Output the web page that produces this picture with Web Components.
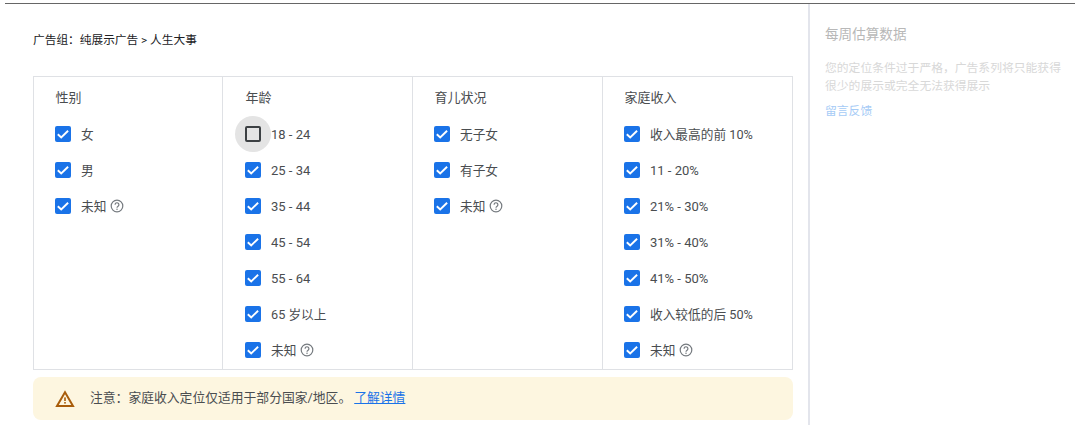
<!DOCTYPE html>
<html>
<head>
<meta charset="utf-8">
<style>
  html, body { margin: 0; background: #fff; overflow: hidden; }
  body { font-family: Roboto, "Noto Sans CJK SC", sans-serif; }
</style>
</head>
<body>

<ad-page>
  <span slot="crumb">广告组：纯展示广告 &gt; 人生大事</span>
  <target-table>
    <target-column>
      <span slot="title">性别</span>
      <target-option>女</target-option>
      <target-option>男</target-option>
      <target-option help>未知</target-option>
    </target-column>
    <target-column>
      <span slot="title">年龄</span>
      <target-option unchecked latin>18 - 24</target-option>
      <target-option latin>25 - 34</target-option>
      <target-option latin>35 - 44</target-option>
      <target-option latin>45 - 54</target-option>
      <target-option latin>55 - 64</target-option>
      <target-option>65 岁以上</target-option>
      <target-option help>未知</target-option>
    </target-column>
    <target-column>
      <span slot="title">育儿状况</span>
      <target-option>无子女</target-option>
      <target-option>有子女</target-option>
      <target-option help>未知</target-option>
    </target-column>
    <target-column>
      <span slot="title">家庭收入</span>
      <target-option>收入最高的前 10%</target-option>
      <target-option latin>11 - 20%</target-option>
      <target-option latin>21% - 30%</target-option>
      <target-option latin>31% - 40%</target-option>
      <target-option latin>41% - 50%</target-option>
      <target-option>收入较低的后 50%</target-option>
      <target-option help>未知</target-option>
    </target-column>
  </target-table>
  <ad-notice>注意：家庭收入定位仅适用于部分国家/地区。<a slot="link" href="#">了解详情</a></ad-notice>
  <estimate-side slot="side">
    <span slot="title">每周估算数据</span>
    您的定位条件过于严格，广告系列将只能获得很少的展示或完全无法获得展示
    <span slot="link">留言反馈</span>
  </estimate-side>
</ad-page>

<script>
// page frame: the dark rule on top, main area on the left, estimate panel on the right
class AdPage extends HTMLElement {
  constructor() {
    super();
    const shadow = this.attachShadow({ mode: "open" });
    shadow.innerHTML = `
    <style>
      :host {
        display: block;
        height: 425px;
        padding-top: 3px;
        box-sizing: border-box;
      }
      .frame {
        margin-left: 5px;
        border-top: 1px solid #666;
        display: flex;
        height: 421px;
      }
      .main {
        width: 803px;
        box-sizing: border-box;
        padding: 0 15px 0 28px;
        flex: none;
      }
      .crumb {
        font-size: 11.7px;
        line-height: 18px;
        color: #202124;
        margin-top: 27px;
        margin-bottom: 27px;
      }
      .side {
        flex: 1;
        border-left: 2px solid #e3e5ec;
      }
    </style>
    <div class="frame">
      <div class="main">
        <div class="crumb"><slot name="crumb"></slot></div>
        <slot></slot>
      </div>
      <div class="side"><slot name="side"></slot></div>
    </div>
    `;
  }
}

class TargetTable extends HTMLElement {
  constructor() {
    super();
    const shadow = this.attachShadow({ mode: "open" });
    shadow.innerHTML = `
    <style>
      :host {
        display: grid;
        grid-template-columns: 189px 190px 190px 1fr;
        width: 760px;
        height: 294px;
        box-sizing: border-box;
        border: 1px solid #dfe1e5;
      }
    </style>
    <slot></slot>
    `;
  }
}

class TargetColumn extends HTMLElement {
  constructor() {
    super();
    const shadow = this.attachShadow({ mode: "open" });
    shadow.innerHTML = `
    <style>
      :host {
        display: block;
        box-sizing: border-box;
        padding: 12px 0 0 21px;
        border-right: 1px solid #dfe1e5;
      }
      :host(:nth-child(2)) { padding-left: 22px; }
      :host(:last-child) { border-right: none; }
      .title {
        font-size: 13px;
        line-height: 18px;
        color: #4a4d50;
        margin-bottom: 9px;
        padding-left: 0.5px;
      }
    </style>
    <div class="title"><slot name="title"></slot></div>
    <slot></slot>
    `;
  }
}

class TargetOption extends HTMLElement {
  constructor() {
    super();
    const shadow = this.attachShadow({ mode: "open" });
    const checked = !this.hasAttribute("unchecked");
    const box = checked
      ? `<svg width="16" height="16" viewBox="0 0 16 16"><rect width="16" height="16" rx="2" fill="#1a73e8"/><path d="M2.8 8.2l3.4 3.3 6.9-6.8" fill="none" stroke="#fff" stroke-width="1.9"/></svg>`
      : `<span class="ripple"></span><svg width="16" height="16" viewBox="0 0 16 16"><rect x="1" y="1" width="14" height="14" rx="1" fill="none" stroke="#3c4043" stroke-width="2"/></svg>`;
    const help = this.hasAttribute("help")
      ? `<svg class="help" width="14" height="14" viewBox="0 0 14 14"><circle cx="7" cy="7" r="5.8" fill="none" stroke="#757a7f" stroke-width="1.2"/><path d="M5.1 5.7a1.9 1.9 0 1 1 3 1.5c-.7.5-1.1.8-1.1 1.6" fill="none" stroke="#757a7f" stroke-width="1.2"/><circle cx="7" cy="10.3" r=".75" fill="#757a7f"/></svg>`
      : "";
    shadow.innerHTML = `
    <style>
      :host {
        display: flex;
        align-items: center;
        height: 36px;
        font-size: 12.7px;
        color: #4a4d50;
      }
      :host([latin]) { font-size: 13px; }
      .box {
        position: relative;
        width: 16px;
        height: 16px;
        margin-right: 10px;
        flex: none;
      }
      svg { display: block; position: relative; }
      .label { padding-bottom: 1px; }
      :host([latin]) .label { padding-bottom: 0; }
      .ripple {
        position: absolute;
        left: -10px;
        top: -10px;
        width: 36px;
        height: 36px;
        border-radius: 50%;
        background: #e4e4e4;
      }
      .help { margin-left: 4px; }
    </style>
    <span class="box">${box}</span>
    <span class="label"><slot></slot></span>
    ${help}
    `;
  }
}

class AdNotice extends HTMLElement {
  constructor() {
    super();
    const shadow = this.attachShadow({ mode: "open" });
    shadow.innerHTML = `
    <style>
      :host {
        display: flex;
        align-items: center;
        width: 760px;
        height: 43px;
        margin-top: 7px;
        padding-left: 22px;
        box-sizing: border-box;
        background: #fdf6e0;
        border-radius: 8px;
        font-size: 12.8px;
        color: #4a4d50;
      }
      svg { margin-right: 15px; flex: none; }
      .text { padding-bottom: 4px; }
      ::slotted(a) {
        margin-left: 3px;
        padding-bottom: 4px;
        color: #1a73e8;
      }
    </style>
    <svg width="20" height="18" viewBox="0 0 20 18">
      <path d="M10 2.2L18 16H2z" fill="none" stroke="#a85c0a" stroke-width="2"/>
      <rect x="9.2" y="7.4" width="1.6" height="3.6" fill="#a85c0a"/>
      <rect x="9.2" y="12" width="1.6" height="1.6" fill="#a85c0a"/>
    </svg>
    <span class="text"><slot></slot></span>
    <slot name="link"></slot>
    `;
  }
}

class EstimateSide extends HTMLElement {
  constructor() {
    super();
    const shadow = this.attachShadow({ mode: "open" });
    shadow.innerHTML = `
    <style>
      :host {
        display: block;
        padding: 21px 15px 0 15px;
      }
      .title {
        font-size: 13.6px;
        line-height: 18px;
        color: #b8b8b8;
        margin-bottom: 16px;
      }
      .text {
        width: 240px;
        font-size: 11.8px;
        line-height: 18px;
        color: #d8d8d8;
      }
      .link {
        font-size: 11.8px;
        line-height: 18px;
        margin-top: 7px;
        color: #a6cbf6;
      }
    </style>
    <div class="title"><slot name="title"></slot></div>
    <div class="text"><slot></slot></div>
    <div class="link"><slot name="link"></slot></div>
    `;
  }
}

customElements.define("ad-page", AdPage);
customElements.define("target-table", TargetTable);
customElements.define("target-column", TargetColumn);
customElements.define("target-option", TargetOption);
customElements.define("ad-notice", AdNotice);
customElements.define("estimate-side", EstimateSide);
</script>
</body>
</html>
